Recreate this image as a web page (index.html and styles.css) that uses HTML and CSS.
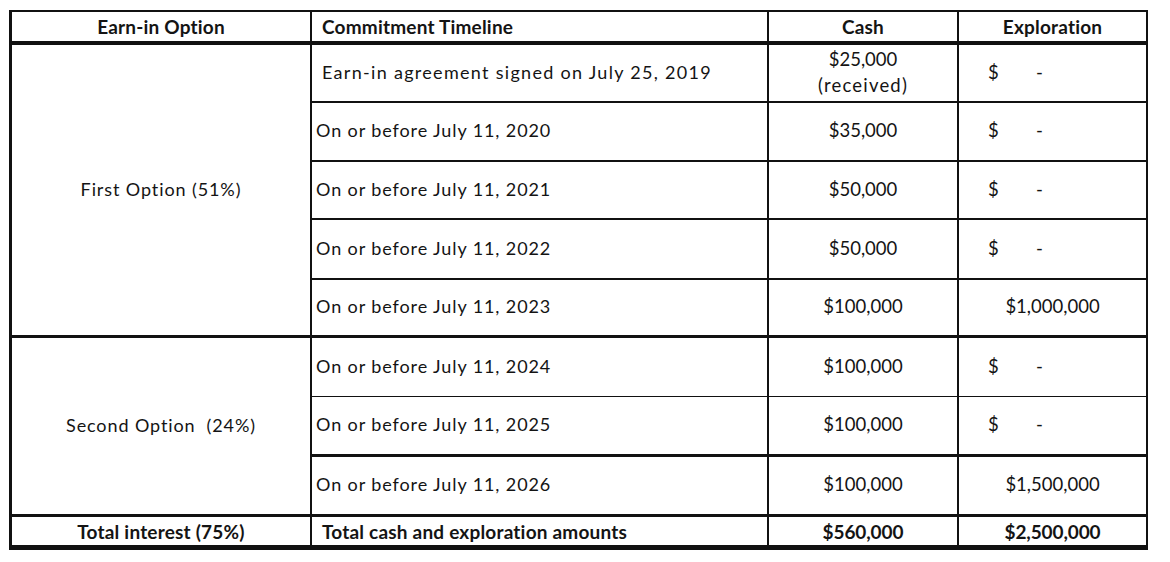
FILE: index.html
```html
<!DOCTYPE html>
<html lang="en">
<head>
<meta charset="utf-8">
<title>Earn-in Option</title>
<link rel="stylesheet" href="styles.css">
</head>
<body>
<table class="earnin">
  <colgroup>
    <col class="c1">
    <col class="c2">
    <col class="c3">
    <col class="c4">
  </colgroup>
  <thead>
    <tr class="r-head">
      <th class="opt">Earn-in Option</th>
      <th class="tl">Commitment Timeline</th>
      <th>Cash</th>
      <th class="last">Exploration</th>
    </tr>
  </thead>
  <tbody>
    <tr class="r1">
      <td class="opt group-end-thick" rowspan="5">First Option (51%)</td>
      <td class="tl indent">Earn-in agreement signed on July 25, 2019</td>
      <td class="num two">$25,000<br><span class="recv">(received)</span></td>
      <td class="last acct"><span class="cur">$</span><span class="dash">-</span></td>
    </tr>
    <tr class="r2">
      <td class="tl">On or before July 11, 2020</td>
      <td class="num">$35,000</td>
      <td class="last acct"><span class="cur">$</span><span class="dash">-</span></td>
    </tr>
    <tr class="r3">
      <td class="tl">On or before July 11, 2021</td>
      <td class="num">$50,000</td>
      <td class="last acct"><span class="cur">$</span><span class="dash">-</span></td>
    </tr>
    <tr class="r4">
      <td class="tl">On or before July 11, 2022</td>
      <td class="num">$50,000</td>
      <td class="last acct"><span class="cur">$</span><span class="dash">-</span></td>
    </tr>
    <tr class="r5 thick">
      <td class="tl">On or before July 11, 2023</td>
      <td class="num">$100,000</td>
      <td class="last num">$1,000,000</td>
    </tr>
    <tr class="r6 thin">
      <td class="opt group-end-thick" rowspan="3">Second Option&nbsp; (24%)</td>
      <td class="tl">On or before July 11, 2024</td>
      <td class="num">$100,000</td>
      <td class="last acct"><span class="cur">$</span><span class="dash">-</span></td>
    </tr>
    <tr class="r7 thick">
      <td class="tl">On or before July 11, 2025</td>
      <td class="num">$100,000</td>
      <td class="last acct"><span class="cur">$</span><span class="dash">-</span></td>
    </tr>
    <tr class="r8 thick">
      <td class="tl">On or before July 11, 2026</td>
      <td class="num">$100,000</td>
      <td class="last num">$1,500,000</td>
    </tr>
  </tbody>
  <tfoot>
    <tr class="r-total">
      <th class="opt">Total interest (75%)</th>
      <th class="tl">Total cash and exploration amounts</th>
      <th class="num">$560,000</th>
      <th class="last num">$2,500,000</th>
    </tr>
  </tfoot>
</table>
</body>
</html>
```

FILE: styles.css
```css
html, body {
  margin: 0;
  padding: 0;
  background: #ffffff;
}

body {
  padding: 10px 0 0 9px;
  font-family: "Lato", "Liberation Sans", sans-serif;
  color: #141414;
}

.earnin {
  border-collapse: separate;
  border-spacing: 0;
  table-layout: fixed;
  width: 1139px;
  border-top: 2px solid #111;
  border-left: 3px solid #111;
}

.c1 { width: 300px; }
.c2 { width: 457px; }
.c3 { width: 190px; }
.c4 { width: 189px; }

.earnin th,
.earnin td {
  padding: 0;
  border-right: 2px solid #111;
  border-bottom: 2px solid #111;
  text-align: center;
  vertical-align: middle;
  overflow: hidden;
  white-space: nowrap;
}

.earnin th {
  font-weight: 700;
  font-size: 19px;
  letter-spacing: 0.2px;
}

.earnin th.num {
  letter-spacing: -0.1px;
}

.earnin td {
  font-weight: 400;
  font-size: 18px;
  letter-spacing: 0.9px;
  padding-bottom: 3px;
}

.earnin td.num {
  font-size: 18.5px;
  letter-spacing: 0;
}

.earnin td.two {
  line-height: 26px;
  padding-bottom: 2px;
}

.recv {
  letter-spacing: 1.2px;
}

.earnin .tl {
  text-align: left;
  padding-left: 4px;
}

.earnin th.tl {
  padding-left: 10px;
}

.earnin td.tl.indent {
  padding-left: 10px;
  letter-spacing: 1.3px;
}

.r-head { height: 33px; }
.r-head th { border-bottom-width: 4px; }

.r1 { height: 58px; }
.r2 { height: 59px; }
.r3 { height: 58px; }
.r4 { height: 60px; }
.r5 { height: 58px; }
.r6 { height: 59px; }
.r7 { height: 60px; }
.r8 { height: 60px; }

.thick td { border-bottom-width: 3px; }
.thin td { border-bottom-width: 1px; }
.earnin td.group-end-thick { border-bottom-width: 3px; }

.r-total { height: 33px; }
.r-total th { border-bottom-width: 5px; }

.earnin td.acct {
  text-align: left;
  font-size: 18.5px;
  letter-spacing: 0;
}

.cur {
  display: inline-block;
  margin-left: 29px;
  width: 48px;
}

.dash {
  display: inline-block;
}
```
